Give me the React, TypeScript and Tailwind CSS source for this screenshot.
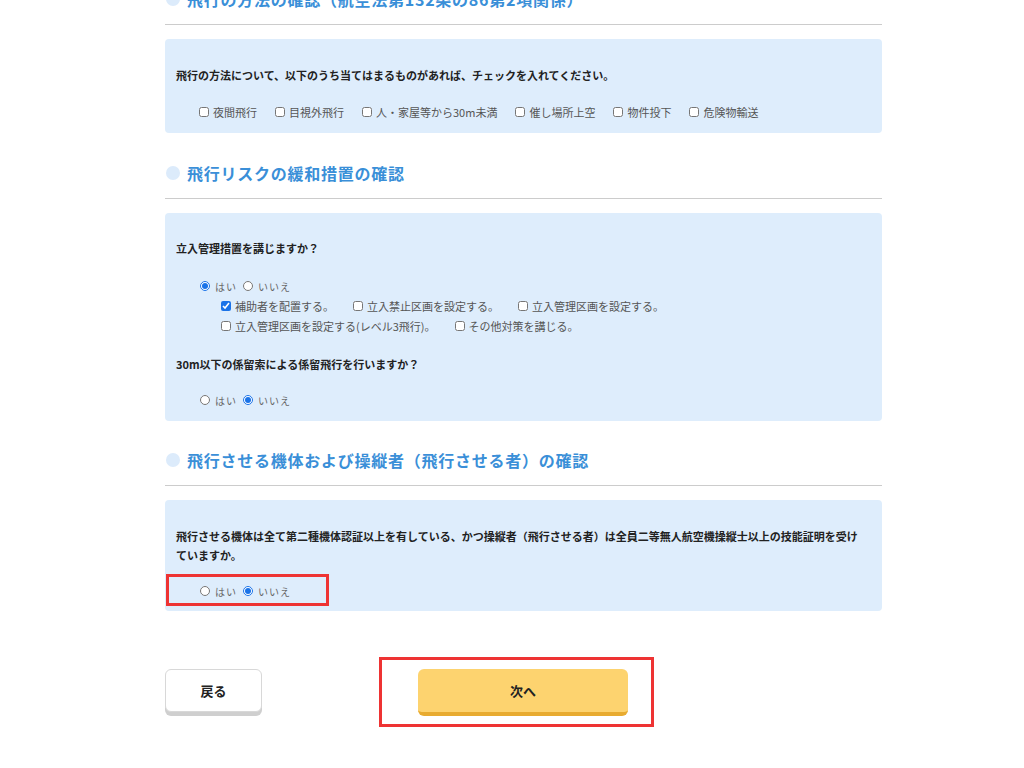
import { ReactNode } from 'react';

const font = { fontFamily: '"Noto Sans CJK JP", "Noto Sans", sans-serif' };

function Heading({ children, className = '' }: { children: ReactNode; className?: string }) {
  return (
    <div className={`flex items-center border-b border-[#cccccc] pb-[13px] ${className}`}>
      <span className="ml-[1px] h-[14px] w-[14px] shrink-0 rounded-full bg-[#dcebfb]" />
      <span className="ml-[7px] text-[16px] leading-[24px] font-bold tracking-[0.75px] text-[#3a8fd8]">
        {children}
      </span>
    </div>
  );
}

function Check({ label, checked = false }: { label: string; checked?: boolean }) {
  return (
    <label className="flex items-center gap-[4px]">
      <input type="checkbox" defaultChecked={checked} className="m-0 h-[10px] w-[10px] accent-[#1a73e8]" />
      <span>{label}</span>
    </label>
  );
}

function YesNo({ name, yes }: { name: string; yes: boolean }) {
  return (
    <div className="flex items-center gap-[6px] h-[20px] text-[10px] text-[#666]">
      <label className="flex items-center gap-[5px]">
        <input type="radio" name={name} defaultChecked={yes} className="m-0 h-[10px] w-[10px] accent-[#1a73e8]" />
        <span className="tracking-[1px]">はい</span>
      </label>
      <label className="flex items-center gap-[5px]">
        <input type="radio" name={name} defaultChecked={!yes} className="m-0 h-[10px] w-[10px] accent-[#1a73e8]" />
        <span className="tracking-[1px]">いいえ</span>
      </label>
    </div>
  );
}

function Question({ children }: { children: ReactNode }) {
  return <p className="text-[11px] leading-[16px] font-bold text-[#222]">{children}</p>;
}

export default function App() {
  return (
    <div className="min-h-screen bg-white overflow-hidden" style={font}>
      <div className="ml-[165px] w-[717px]">
        <Heading className="mt-[-13px]">飛行の方法の確認（航空法第132条の86第2項関係）</Heading>

        <div className="mt-[14px] rounded-[4px] bg-[#deedfc] pl-[11px] pt-[28px] pb-[11px]">
          <Question>飛行の方法について、以下のうち当てはまるものがあれば、チェックを入れてください。</Question>
          <div className="mt-[19px] ml-[23px] flex h-[20px] items-center gap-[18px] text-[11px] text-[#555]">
            <Check label="夜間飛行" />
            <Check label="目視外飛行" />
            <Check label="人・家屋等から30m未満" />
            <Check label="催し場所上空" />
            <Check label="物件投下" />
            <Check label="危険物輸送" />
          </div>
        </div>

        <Heading className="mt-[28px]">飛行リスクの緩和措置の確認</Heading>

        <div className="mt-[14px] rounded-[4px] bg-[#deedfc] pl-[11px] pt-[27px] pb-[11px]">
          <Question>立入管理措置を講じますか？</Question>
          <div className="mt-[20px] ml-[24px]">
            <YesNo name="q1" yes />
          </div>
          <div className="ml-[45px] text-[11px] text-[#555]">
            <div className="flex h-[20px] items-center gap-[19px]">
              <Check label="補助者を配置する。" checked />
              <Check label="立入禁止区画を設定する。" />
              <Check label="立入管理区画を設定する。" />
            </div>
            <div className="flex h-[20px] items-center gap-[19px]">
              <Check label="立入管理区画を設定する(レベル3飛行)。" />
              <Check label="その他対策を講じる。" />
            </div>
          </div>
          <div className="mt-[20px]">
            <Question>30m以下の係留索による係留飛行を行いますか？</Question>
          </div>
          <div className="mt-[18px] ml-[24px]">
            <YesNo name="q2" yes={false} />
          </div>
        </div>

        <Heading className="mt-[27px]">飛行させる機体および操縦者（飛行させる者）の確認</Heading>

        <div className="mt-[14px] rounded-[4px] bg-[#deedfc] pt-[27px] pb-[5px]">
          <p className="pl-[11px] pr-[14px] text-[11px] leading-[19px] font-bold text-[#222]">
            飛行させる機体は全て第二種機体認証以上を有している、かつ操縦者（飛行させる者）は全員二等無人航空機操縦士以上の技能証明を受けていますか。
          </p>
          <div className="mt-[9px] ml-[1px] flex h-[32px] w-[163px] items-center border-[3px] border-[#ee3333] pl-[31px] pt-[2px]">
            <YesNo name="q3" yes={false} />
          </div>
        </div>

        <div className="mt-[46px] flex items-start">
          <button className="mt-[12px] flex h-[43px] w-[97px] items-center justify-center rounded-[6px] border border-[#d8d8d8] bg-white text-[13px] font-bold text-[#222] shadow-[0_4px_0_#cfcfcf]">
            戻る
          </button>
          <div className="ml-[117px] w-[275px] border-[3px] border-[#ee3333] pl-[36px] pt-[9px] pb-[8px]">
            <button className="flex h-[47px] w-[210px] items-center justify-center rounded-[6px] border-b-[4px] border-[#e8ab30] bg-[#fdd36f] text-[13px] font-bold text-[#222]">
              次へ
            </button>
          </div>
        </div>
      </div>
    </div>
  );
}
